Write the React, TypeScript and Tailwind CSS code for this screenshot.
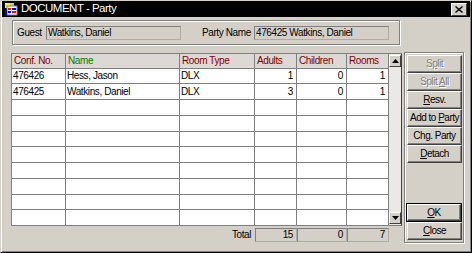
import React from "react";

const cols = [
  { label: "Conf. No.", w: 54, color: "text-[#800000]", align: "left" },
  { label: "Name", w: 114, color: "text-[#008000]", align: "left" },
  { label: "Room Type", w: 75, color: "text-[#800000]", align: "left" },
  { label: "Adults", w: 42, color: "text-[#800000]", align: "right" },
  { label: "Children", w: 50, color: "text-[#800000]", align: "right" },
  { label: "Rooms", w: 42, color: "text-[#800000]", align: "right" },
];

const data: string[][] = [
  ["476426", "Hess, Jason", "DLX", "1", "0", "1"],
  ["476425", "Watkins, Daniel", "DLX", "3", "0", "1"],
];

const rowHeights = [15, 16, 16, 16, 15, 16, 16, 16, 15, 16];

function Btn({
  label,
  u,
  disabled,
  def,
}: {
  label: string;
  u: number;
  disabled?: boolean;
  def?: boolean;
}) {
  const pre = label.slice(0, u);
  const ch = label.slice(u, u + 1);
  const post = label.slice(u + 1);
  const inner = (
    <div
      className={`h-full w-full flex items-center justify-center border-t border-l border-t-white border-l-white border-b border-r border-b-[#404040] border-r-[#404040] shadow-[inset_-1px_-1px_0_#808080] tracking-[-0.5px] ${
        disabled ? "text-[#808080] [text-shadow:1px_1px_0_#fff]" : "text-black"
      }`}
    >
      <span>
        {pre}
        <span className="underline underline-offset-[1px]">{ch}</span>
        {post}
      </span>
    </div>
  );
  if (def) {
    return <div className="h-[19px] w-[56px] border border-black">{inner}</div>;
  }
  return <div className="h-[18px] w-[55px]">{inner}</div>;
}

function Field({ text, w }: { text: string; w: number }) {
  return (
    <div
      className="h-[14px] border border-[#808080] border-r-[#b0aca4] border-b-[#b0aca4] flex items-center pl-[1px] text-black"
      style={{ width: w }}
    >
      {text}
    </div>
  );
}

export default function App() {
  return (
    <div className="w-[472px] h-[253px] bg-[#d4d0c8] flex flex-col overflow-hidden border-t border-l border-t-[#d4d0c8] border-l-[#d4d0c8] border-r border-b border-r-black border-b-black shadow-[inset_1px_1px_0_#fff,inset_-1px_-1px_0_#808080] font-['Liberation_Sans',Arial,sans-serif] text-[10px] tracking-[-0.4px] leading-none">
      {/* Title bar */}
      <div className="h-[16px] bg-black flex items-center pl-[2px] pr-[2px] mx-[1px]">
        <svg width="14" height="14" viewBox="0 0 14 14" className="shrink-0">
          <rect x="0" y="0" width="14" height="14" fill="#000" />
          <rect x="1" y="1" width="5" height="5" fill="#ffff00" />
          <rect x="6" y="1" width="4" height="4" fill="#c0c0c0" />
          <rect x="3" y="4" width="10" height="9" fill="#fff" stroke="#808080" strokeWidth="1" />
          <rect x="4" y="6" width="3" height="2" fill="#ff0000" />
          <rect x="8" y="6" width="4" height="2" fill="#0000ff" />
          <rect x="4" y="9" width="3" height="2" fill="#0000ff" />
          <rect x="8" y="9" width="4" height="2" fill="#ff0000" />
          <rect x="1" y="8" width="2" height="5" fill="#0000ff" />
        </svg>
        <span className="text-white text-[11.5px] ml-[3px] tracking-[-0.5px]">DOCUMENT - Party</span>
        <div className="ml-auto mr-[1px] w-[16px] h-[13px] bg-[#d4d0c8] border-t border-l border-t-white border-l-white border-b border-r border-b-[#404040] border-r-[#404040] flex items-center justify-center">
          <svg width="8" height="7" viewBox="0 0 8 7">
            <path d="M0.5 0.5 L7.5 6.5 M7.5 0.5 L0.5 6.5" stroke="#000" strokeWidth="1.4" />
          </svg>
        </div>
      </div>

      {/* Body */}
      <div className="flex-1 flex flex-col pl-[10px]">
        {/* Group box */}
        <div className="mt-[3px] ml-[1px] w-[388px] h-[25px] border border-[#808080] shadow-[inset_1px_1px_0_#fff,1px_1px_0_#fff] flex items-center pl-[4px]">
          <span className="w-[29px] text-black">Guest</span>
          <Field text="Watkins, Daniel" w={135} />
          <span className="ml-[21px] w-[52px] text-black">Party Name</span>
          <Field text="476425 Watkins, Daniel" w={135} />
        </div>

        {/* Main area */}
        <div className="flex mt-[7px]">
          {/* Grid + totals */}
          <div className="w-[391px] flex flex-col pt-[1px]">
            <div className="flex border-t border-l border-[#808080]">
              <div className="flex flex-col">
                {/* header */}
                <div className="flex h-[15px] bg-[#dcd9d4]">
                  {cols.map((c, i) => (
                    <div
                      key={i}
                      className={`h-full border-r border-b border-[#808080] flex items-center ${c.color} pl-[2px]`}
                      style={{ width: c.w }}
                    >
                      {c.label}
                    </div>
                  ))}
                </div>
                {rowHeights.map((h, r) => (
                  <div key={r} className="flex bg-white" style={{ height: h }}>
                    {cols.map((c, i) => (
                      <div
                        key={i}
                        className={`h-full border-r border-b border-[#808080] flex items-center text-black ${
                          c.align === "right" ? "justify-end pr-[3px]" : "pl-[1px]"
                        }`}
                        style={{ width: c.w }}
                      >
                        {data[r] ? data[r][i] : ""}
                      </div>
                    ))}
                  </div>
                ))}
              </div>
              {/* scrollbar */}
              <div className="w-[13px] flex flex-col bg-[#ebe9e5] border-r border-b border-r-[#404040] border-b-[#808080]">
                <div className="h-[12px] w-[12px] mt-[1px] bg-[#d4d0c8] border-t border-l border-t-white border-l-white border-b border-r border-b-[#404040] border-r-[#404040] flex items-center justify-center">
                  <svg width="7" height="4" viewBox="0 0 7 4">
                    <path d="M3.5 0 L7 4 L0 4 Z" fill="#000" />
                  </svg>
                </div>
                <div className="flex-1" />
                <div className="h-[12px] w-[12px] mb-[1px] bg-[#d4d0c8] border-t border-l border-t-white border-l-white border-b border-r border-b-[#404040] border-r-[#404040] flex items-center justify-center">
                  <svg width="7" height="4" viewBox="0 0 7 4">
                    <path d="M0 0 L7 0 L3.5 4 Z" fill="#000" />
                  </svg>
                </div>
              </div>
            </div>
            {/* totals */}
            <div className="flex mt-[2px] h-[14px]">
              <div className="w-[244px] flex items-center justify-end pr-[4px] text-black">Total</div>
              {[
                { v: "15", w: 42 },
                { v: "0", w: 50 },
                { v: "7", w: 42 },
              ].map((t, i) => (
                <div
                  key={i}
                  className="h-full border border-[#808080] border-r-[#b0aca4] border-b-[#b0aca4] flex items-center justify-end pr-[3px] text-black"
                  style={{ width: t.w }}
                >
                  {t.v}
                </div>
              ))}
            </div>
          </div>

          {/* Button panel */}
          <div className="ml-[2px] w-[60px] h-[191px] border border-[#808080] shadow-[inset_1px_1px_0_#fff,1px_1px_0_#fff] flex flex-col pl-[2px] pt-[2px] pb-[2px]">
            <Btn label="Split" u={1} disabled />
            <Btn label="Split All" u={6} disabled />
            <Btn label="Resv." u={0} />
            <Btn label="Add to Party" u={7} />
            <Btn label="Chg. Party" u={2} />
            <Btn label="Detach" u={0} />
            <div className="flex-1" />
            <div className="-ml-[1px]">
              <Btn label="OK" u={0} def />
            </div>
            <Btn label="Close" u={0} />
          </div>
        </div>
      </div>
    </div>
  );
}
